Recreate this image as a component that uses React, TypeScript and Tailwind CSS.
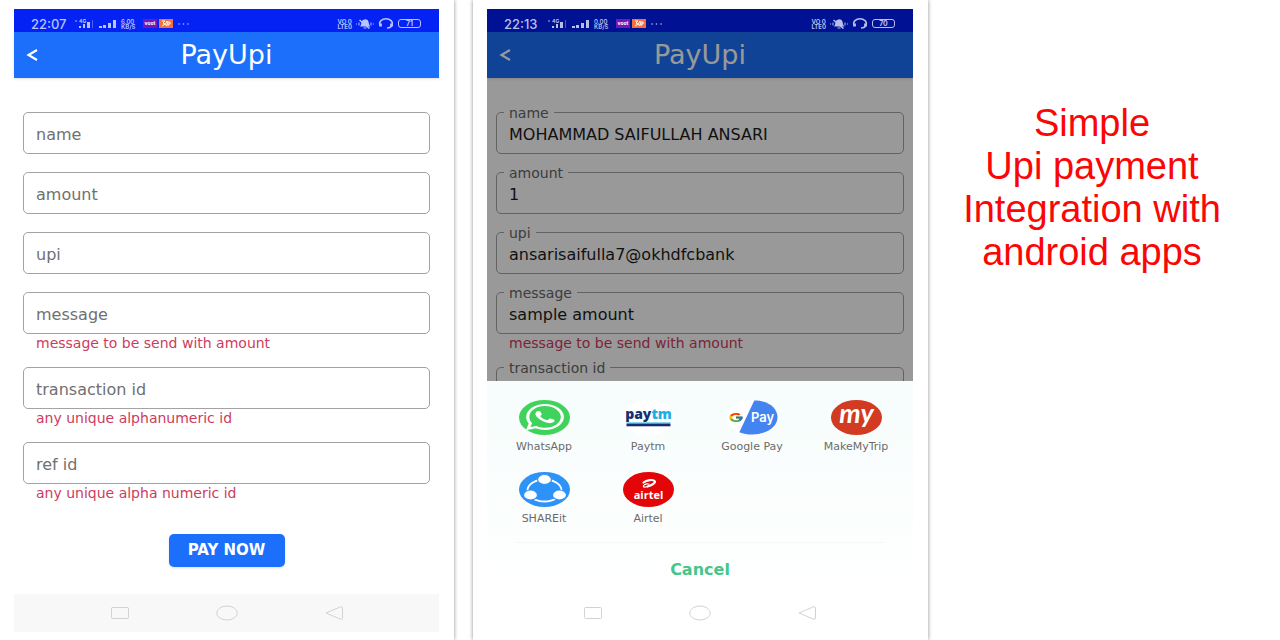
import type { ReactNode } from "react";
import { FaWhatsapp } from "react-icons/fa";
import { FcGoogle } from "react-icons/fc";

type FieldSpec = { label: string; value?: string; helper?: string };

const emptyFields: FieldSpec[] = [
  { label: "name" },
  { label: "amount" },
  { label: "upi" },
  { label: "message", helper: "message to be send with amount" },
  { label: "transaction id", helper: "any unique alphanumeric id" },
  { label: "ref id", helper: "any unique alpha numeric id" },
];

const filledFields: FieldSpec[] = [
  { label: "name", value: "MOHAMMAD SAIFULLAH ANSARI" },
  { label: "amount", value: "1" },
  { label: "upi", value: "ansarisaifulla7@okhdfcbank" },
  { label: "message", value: "sample amount", helper: "message to be send with amount" },
  { label: "transaction id", value: "" },
];

function StatusBar({ time, rate, battery, dimmed }: { time: string; rate: string; battery: string; dimmed?: boolean }) {
  return (
    <div
      className={`flex h-[23px] items-center justify-between pt-[6px] pr-[18px] pl-[17px] font-['Inter','Roboto',sans-serif] ${
        dimmed ? "bg-[#001194] text-[#b9bfe8]" : "bg-[#0322f3] text-[#b7c4ff]"
      }`}
    >
      <div className="flex items-center">
        <span className="w-[41px] text-[13px] leading-[14px] font-medium">{time}</span>
        <svg className="h-[10px] w-[46px]" viewBox="0 0 46 10" fill="currentColor" aria-hidden="true">
          <circle cx="4" cy="2" r="1" opacity=".6" />
          <text x="7" y="4" fontSize="5" fontWeight="700">4G</text>
          <rect x="7" y="7" width="2" height="2" />
          <rect x="11" y="5" width="2" height="4" />
          <rect x="15" y="3" width="3" height="6" />
          <rect x="20" y="1" width="1" height="8" opacity=".4" />
          <rect x="27" y="7" width="3" height="2" />
          <rect x="31" y="6" width="3" height="3" />
          <rect x="36" y="4" width="3" height="5" />
          <rect x="41" y="1" width="3" height="8" />
        </svg>
        <span className="flex w-[25px] flex-col pl-[3px] text-[6px] leading-[5px] font-semibold">
          <span>{rate}</span>
          <span>KB/S</span>
        </span>
        <span className="flex h-[9px] w-[14px] items-center justify-center bg-[#7417b5] text-[5px] leading-none font-bold text-white">voot</span>
        <svg className="ml-[2px] h-[9px] w-[14px]" viewBox="0 0 14 9" fill="none" stroke="#fff" aria-hidden="true">
          <rect width="14" height="9" fill="#f2703a" stroke="none" />
          <path d="M3 2h3l-2 2 2 1-3 2M6 6l2-4 1 2-2 3M9 3h2v2H9v2" />
        </svg>
        <svg className="ml-[5px] h-[2px] w-[11px]" viewBox="0 0 11 2" fill="currentColor" aria-hidden="true">
          <circle cx="1" cy="1" r=".8" />
          <circle cx="5.5" cy="1" r=".8" />
          <circle cx="10" cy="1" r=".8" />
        </svg>
      </div>
      <div className="flex items-center gap-1">
        <span className="flex flex-col text-[6px] leading-[5px] font-bold">
          <span>VO 0</span>
          <span>LTE0</span>
        </span>
        <svg className="h-[10px] w-[18px]" viewBox="0 0 18 10" fill="none" stroke="currentColor" aria-hidden="true">
          <path d="M4 7.500C5.500 6.500 5 2 7 1s3-.8 4.500 0 1 5 3 6.500z" fill="currentColor" stroke="none" />
          <path d="M7.500 9h3" />
          <path d="M3.500 1l10 8.500" strokeWidth="1.500" />
          <path d="M3 3.500v3M.5 4.500v1M15 3.500v3M17.500 4.500v1" />
        </svg>
        <svg className="h-[11px] w-[16px]" viewBox="0 0 16 11" fill="none" stroke="currentColor" strokeWidth="1.500" aria-hidden="true">
          <path d="M2 7C.5 3.500 4 .8 8 .8S15.500 3.500 14 7c-.6 1.800-2 3-5 3" />
          <path d="M2.500 5.500v3M13.500 5.500v3" strokeWidth="2.800" />
        </svg>
        <span className="flex h-[9px] w-[23px] items-center justify-center rounded-[3px] border border-current text-[7px] leading-none font-bold">
          {battery}
        </span>
      </div>
    </div>
  );
}

function AppHeader() {
  return (
    <header className="grid h-[46px] grid-cols-[40px_1fr_40px] items-center bg-[#1b6ffb] text-white shadow-sm">
      <button type="button" aria-label="Back" className="flex h-full items-center pl-[12px]">
        <svg className="h-[12px] w-[12px]" viewBox="0 0 12 12" fill="none" stroke="currentColor" strokeWidth="2.200" aria-hidden="true">
          <path d="M11 1L2.500 6l8.500 5" />
        </svg>
      </button>
      <h2 className="text-center text-[27px] leading-[32px]">PayUpi</h2>
    </header>
  );
}

function Field({ label, value, helper, prefix }: FieldSpec & { prefix: string }) {
  const id = `${prefix}-${label.replace(" ", "-")}`;
  const filled = value !== undefined;
  return (
    <div className="relative">
      {filled && (
        <label htmlFor={id} className="absolute -top-[8px] left-[8px] bg-white px-[5px] text-[14px] leading-[18px] text-[#666]">
          {label}
        </label>
      )}
      <input
        id={id}
        aria-label={filled ? undefined : label}
        placeholder={filled ? undefined : label}
        defaultValue={value}
        className="block h-[42px] w-full rounded-[5px] border border-[#a3a3a3] bg-transparent px-[12px] pt-[2px] text-[16px] leading-[20px] text-[#1c1c1c] outline-none placeholder:text-[#707070]"
      />
      {helper && <p className="h-[15px] pl-[13px] text-[14px] leading-[18px] text-[#cc3c5e]">{helper}</p>}
    </div>
  );
}

function NavBar({ className = "" }: { className?: string }) {
  return (
    <nav aria-label="System" className={`flex h-[38px] items-center justify-center gap-[87px] ${className}`}>
      <button type="button" aria-label="Recent apps">
        <svg className="h-[14px] w-[18px]" viewBox="0 0 18 14" fill="none" stroke="#d2d2d2" aria-hidden="true">
          <rect x=".5" y="1.500" width="17" height="11" rx="1" />
        </svg>
      </button>
      <button type="button" aria-label="Home">
        <svg className="h-[16px] w-[22px]" viewBox="0 0 22 16" fill="none" stroke="#d2d2d2" aria-hidden="true">
          <ellipse cx="11" cy="8" rx="10.300" ry="7" />
        </svg>
      </button>
      <button type="button" aria-label="Back">
        <svg className="h-[14px] w-[18px]" viewBox="0 0 18 14" fill="none" stroke="#d2d2d2" aria-hidden="true">
          <path d="M1 7L15.500.8q2-.6 2 1v10.400q0 1.600-2 1z" />
        </svg>
      </button>
    </nav>
  );
}

function Disc({ fill, children }: { fill: string; children?: ReactNode }) {
  return (
    <svg className="h-[35px] w-[51px] overflow-visible" viewBox="0 0 51 35" aria-hidden="true">
      <ellipse cx="25.500" cy="17.500" rx="25.500" ry="17.500" fill={fill} />
      {children}
    </svg>
  );
}

const apps: { name: string; icon: ReactNode }[] = [
  {
    name: "WhatsApp",
    icon: (
      <Disc fill="#3fd35c">
        <FaWhatsapp x="7" y="2" className="h-[30px] w-[38px]" preserveAspectRatio="none" color="#fff" />
      </Disc>
    ),
  },
  {
    name: "Paytm",
    icon: (
      <Disc fill="#fff">
        <text x="25.500" y="19" textAnchor="middle" fontFamily="Open Sans, sans-serif" fontSize="14" fontWeight="800" fill="#12306f">
          pay<tspan fill="#1eaee5">tm</tspan>
        </text>
        <rect x="3.500" y="22.500" width="44" height="1.500" fill="#1eaee5" />
        <rect x="3.500" y="24" width="44" height="2.300" fill="#12306f" />
      </Disc>
    ),
  },
  {
    name: "Google Pay",
    icon: (
      <Disc fill="#fff">
        <path d="M27.300.5C41 .5 50.500 8 50.500 17.500S39 34.500 25.500 34.500c-5 0-9-.6-13.200-2.300z" fill="#4384f0" />
        <FcGoogle x="1" y="12" className="h-[11px] w-[16px]" preserveAspectRatio="none" />
        <text x="24" y="22" fontFamily="Inter, sans-serif" fontSize="13" fontWeight="600" fill="#fff">Pay</text>
      </Disc>
    ),
  },
  {
    name: "MakeMyTrip",
    icon: (
      <Disc fill="#d23a22">
        <text x="25.500" y="23" textAnchor="middle" fontFamily="Lato, sans-serif" fontSize="27" fontWeight="700" fontStyle="italic" fill="#fff">my</text>
      </Disc>
    ),
  },
  {
    name: "SHAREit",
    icon: (
      <Disc fill="#2e93f8">
        <ellipse cx="25.500" cy="18.500" rx="17" ry="11" fill="none" stroke="#fff" strokeWidth="1.800" />
        <g fill="#fff" stroke="#2e93f8" strokeWidth="1.200">
          <ellipse cx="25.500" cy="7.500" rx="7" ry="5" />
          <ellipse cx="11.500" cy="23" rx="7" ry="5" />
          <ellipse cx="40.500" cy="23" rx="7" ry="5" />
        </g>
      </Disc>
    ),
  },
  {
    name: "Airtel",
    icon: (
      <Disc fill="#e30508">
        <path d="M20.500 10.500c3-2.500 10-3.500 11.300-1.200 1 2-4 4.200-7.300 5.200" fill="none" stroke="#fff" strokeWidth="2.200" strokeLinecap="round" />
        <path d="M24.500 14.500c-3.500 1.300-5 .2-3.500-1.300s4-1.700 5-1" fill="none" stroke="#fff" strokeWidth="1.200" strokeLinecap="round" />
        <text x="25.500" y="27" textAnchor="middle" fontFamily="Open Sans, sans-serif" fontSize="11" fontWeight="700" fill="#fff">airtel</text>
      </Disc>
    ),
  },
];

function AppChooser() {
  return (
    <section aria-label="Choose an app" className="bg-linear-to-b from-[#f6fdfc] to-white pt-[19px]">
      <div className="grid grid-cols-4 gap-y-[17px] px-[5px]">
        {apps.map((app) => (
          <button key={app.name} type="button" className="flex flex-col items-center gap-1 text-[11px] leading-4 text-[#6b6b6b]">
            {app.icon}
            {app.name}
          </button>
        ))}
      </div>
      <hr className="mx-[28px] mt-[15px] border-[#f5f7f6]" />
      <button type="button" className="block h-[51px] w-full pt-[2px] text-[16px] font-bold text-[#45c68b]">
        Cancel
      </button>
    </section>
  );
}

export default function App() {
  return (
    <div className="grid min-h-screen grid-cols-[454fr_474fr_352fr] bg-white font-['DejaVu_Sans',sans-serif]">
      <section className="pr-[15px] pl-[14px] pt-[9px] shadow-[0_0_4px_rgba(0,0,0,0.45)]">
        <StatusBar time="22:07" rate="6.00" battery="71" />
        <AppHeader />
        <form className="px-[9px] pt-[34px]">
          <div className="flex flex-col gap-[18px]">
            {emptyFields.map((field) => (
              <Field key={field.label} prefix="new" {...field} />
            ))}
          </div>
          <div className="mt-[35px] mb-[27px] flex justify-center">
            <button type="button" className="h-[33px] w-[116px] rounded-[5px] bg-[#1b6ffb] text-[15px] font-bold text-white shadow">
              PAY NOW
            </button>
          </div>
        </form>
        <NavBar className="bg-[#f8f8f8]" />
      </section>

      <section className="ml-[19px] pr-[15px] pl-[14px] pt-[9px] shadow-[0_0_4px_rgba(0,0,0,0.45)]">
        <StatusBar time="22:13" rate="0.00" battery="70" dimmed />
        <div className="relative max-h-[349px] overflow-hidden">
          <AppHeader />
          <form className="flex flex-col gap-[18px] px-[9px] pt-[34px]">
            {filledFields.map((field) => (
              <Field key={field.label} prefix="sent" {...field} />
            ))}
          </form>
          <div className="absolute inset-0 bg-black/40" />
        </div>
        <AppChooser />
        <NavBar />
      </section>

      <h1 className="pt-[102px] pr-[24px] text-center font-['Liberation_Sans',Arial,sans-serif] text-[38px] leading-[43px] text-[#fb0505]">
        Simple
        <br />
        Upi payment
        <br />
        Integration with
        <br />
        android apps
      </h1>
    </div>
  );
}
